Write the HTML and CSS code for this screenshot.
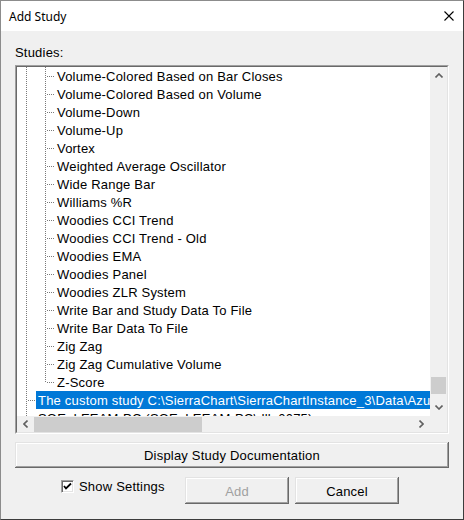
FILE: index.html
```html
<!DOCTYPE html>
<html lang="en">
<head>
    <meta charset="UTF-8">
    <title>Add Study</title>
    <link rel="stylesheet" href="styles.css">
</head>
<body>
    <!-- dialog window -->
    <div class="dialog">
        <div class="titlebar">
            <span class="title">Add Study</span>
            <svg class="close" width="10" height="10" viewBox="0 0 10 10">
                <path d="M0.5 0.5 L9.5 9.5 M9.5 0.5 L0.5 9.5" stroke="#000" stroke-width="1.1" fill="none"/>
            </svg>
        </div>

        <div class="content">
            <div class="caption">Studies:</div>

            <!-- tree view with both scrollbars -->
            <div class="tree">
                <div class="tree-inner">
                    <ul class="nodes">
                        <li class="node child"><span class="label">Volume-Colored Based on Bar Closes</span></li>
                        <li class="node child"><span class="label">Volume-Colored Based on Volume</span></li>
                        <li class="node child"><span class="label">Volume-Down</span></li>
                        <li class="node child"><span class="label">Volume-Up</span></li>
                        <li class="node child"><span class="label">Vortex</span></li>
                        <li class="node child"><span class="label">Weighted Average Oscillator</span></li>
                        <li class="node child"><span class="label">Wide Range Bar</span></li>
                        <li class="node child"><span class="label">Williams %R</span></li>
                        <li class="node child"><span class="label">Woodies CCI Trend</span></li>
                        <li class="node child"><span class="label">Woodies CCI Trend - Old</span></li>
                        <li class="node child"><span class="label">Woodies EMA</span></li>
                        <li class="node child"><span class="label">Woodies Panel</span></li>
                        <li class="node child"><span class="label">Woodies ZLR System</span></li>
                        <li class="node child"><span class="label">Write Bar and Study Data To File</span></li>
                        <li class="node child"><span class="label">Write Bar Data To File</span></li>
                        <li class="node child"><span class="label">Zig Zag</span></li>
                        <li class="node child"><span class="label">Zig Zag Cumulative Volume</span></li>
                        <li class="node child last"><span class="label">Z-Score</span></li>
                        <li class="node top"><span class="label selected">The custom study C:\SierraChart\SierraChartInstance_3\Data\AzureStudies_64.dll</span></li>
                        <li class="node top"><span class="label">SOE_LEEAM-PC (SOE_LEEAM-PC\dll_0075)</span></li>
                    </ul>

                    <div class="vscroll">
                        <div class="arrow">
                            <svg width="8" height="5" viewBox="0 0 8 5"><polyline points="0.5,4.5 4,1 7.5,4.5" fill="none" stroke="#606060" stroke-width="1.6"/></svg>
                        </div>
                        <div class="track v">
                            <div class="thumb"></div>
                        </div>
                        <div class="arrow">
                            <svg width="8" height="5" viewBox="0 0 8 5"><polyline points="0.5,0.5 4,4 7.5,0.5" fill="none" stroke="#606060" stroke-width="1.6"/></svg>
                        </div>
                    </div>

                    <div class="hscroll">
                        <div class="arrow">
                            <svg width="5" height="8" viewBox="0 0 5 8"><polyline points="4.5,0.5 1,4 4.5,7.5" fill="none" stroke="#606060" stroke-width="1.6"/></svg>
                        </div>
                        <div class="track h">
                            <div class="thumb"></div>
                        </div>
                        <div class="arrow">
                            <svg width="5" height="8" viewBox="0 0 5 8"><polyline points="0.5,0.5 4,4 0.5,7.5" fill="none" stroke="#606060" stroke-width="1.6"/></svg>
                        </div>
                    </div>

                    <div class="corner"></div>
                </div>
            </div>

            <button class="btn wide">Display Study Documentation</button>

            <div class="footer">
                <label class="check">
                    <span class="box">
                        <svg width="9" height="9" viewBox="0 0 9 9"><polyline points="1,4 3,6.5 8,1.5" fill="none" stroke="#000" stroke-width="1.8"/></svg>
                    </span>
                    Show Settings
                </label>
                <button class="btn small" disabled>Add</button>
                <button class="btn small">Cancel</button>
            </div>
        </div>
    </div>
</body>
</html>
```

FILE: styles.css
```css
*{
    margin: 0;
    padding: 0;
    box-sizing: border-box;
}

html, body{
    background-color: #3a3a3a;
}

.dialog{
    width: 464px;
    height: 520px;
    background-color: #f0f0f0;
    border: 1px solid #8c8c8c;
    border-right-color: #3c3c3c;
    border-bottom-color: #3c3c3c;
    font-family: "Liberation Sans", Arial, sans-serif;
    font-size: 13px;
    letter-spacing: 0.2px;
    color: #000;
}

/* title bar */
.titlebar{
    height: 30px;
    background-color: #fff;
    display: flex;
    align-items: center;
    justify-content: space-between;
    padding: 0 9px 0 8px;
}

.title{
    font-family: "Noto Sans", "Open Sans", sans-serif;
    font-size: 12px;
    letter-spacing: 0;
    padding-top: 1px;
}

.close{
    display: block;
}

.content{
    padding: 14px 14px 0 14px;
}

.caption{
    height: 16px;
    line-height: 16px;
    margin-bottom: 4px;
}

/* sunken 3D frame */
.tree{
    height: 369px;
    border: 1px solid;
    border-color: #a0a0a0 #fff #fff #a0a0a0;
}

.tree-inner{
    height: 100%;
    border: 1px solid;
    border-color: #696969 #e3e3e3 #e3e3e3 #696969;
    display: grid;
    grid-template-columns: 1fr 17px;
    grid-template-rows: 1fr 16px;
    overflow: hidden;
}

.nodes{
    list-style: none;
    background-color: #fff;
    overflow: hidden;

    --vdot: repeating-linear-gradient(to bottom, #7a7a7a 0 1px, transparent 1px 2px);
    --hdot: repeating-linear-gradient(to right, #7a7a7a 0 1px, transparent 1px 2px);
}

.node{
    height: 18px;
    white-space: nowrap;
    background-repeat: no-repeat;
}

/* second level: two guide lines and a branch */
.node.child{
    padding-left: 38px;
    background-image: var(--vdot), var(--vdot), var(--hdot);
    background-position: 9px 0, 28px 0, 30px 9px;
    background-size: 1px 18px, 1px 18px, 8px 1px;
}

.node.child.last{
    background-size: 1px 18px, 1px 10px, 8px 1px;
}

.node.top{
    padding-left: 19px;
    background-image: var(--vdot), var(--hdot);
    background-position: 9px 0, 11px 9px;
    background-size: 1px 18px, 8px 1px;
}

.label{
    display: inline-block;
    height: 18px;
    line-height: 18px;
    padding: 1px 2px 0 2px;
}

.label.selected{
    background-color: #0078d7;
    color: #fff;
}

/* scrollbars */
.vscroll, .hscroll, .corner{
    background-color: #f0f0f0;
}

.vscroll{
    display: flex;
    flex-direction: column;
}

.hscroll{
    display: flex;
}

.arrow{
    flex: 0 0 17px;
    display: flex;
    align-items: center;
    justify-content: center;
}

.arrow svg{
    display: block;
}

.track{
    flex: 1;
    display: flex;
}

.track.v{
    flex-direction: column;
    padding: 0 1px;
}

.track.v .thumb{
    height: 17px;
    margin-top: auto;
    margin-bottom: 5px;
    background-color: #cdcdcd;
}

.track.h{
    padding: 1px 0 0 0;
}

.track.h .thumb{
    width: 168px;
    background-color: #cdcdcd;
}

/* buttons */
.btn{
    display: block;
    font-family: "Liberation Sans", Arial, sans-serif;
    font-size: 13px;
    letter-spacing: 0.2px;
    color: #000;
    background-color: #f0f0f0;
    border: none;
    box-shadow: inset -1px -1px #696969, inset 1px 1px #e3e3e3, inset -2px -2px #a0a0a0, inset 2px 2px #fff;
}

.btn.wide{
    width: 100%;
    height: 26px;
    margin-top: 8px;
}

.btn.small{
    width: 104px;
    height: 27px;
    padding-top: 2px;
}

.btn:disabled{
    color: #a0a0a0;
}

.footer{
    display: flex;
    align-items: flex-start;
    margin-top: 9px;
    padding-left: 46px;
}

.check{
    display: flex;
    align-items: center;
    gap: 5px;
    margin-top: 2px;
    width: 124px;
}

.box{
    width: 13px;
    height: 13px;
    background-color: #fff;
    border: 1px solid;
    border-color: #a0a0a0 #fff #fff #a0a0a0;
    box-shadow: inset 1px 1px #696969, inset -1px -1px #e3e3e3;
    display: flex;
    align-items: center;
    justify-content: center;
}

.box svg{
    display: block;
}

.btn.small + .btn.small{
    margin-left: 6px;
}
```
